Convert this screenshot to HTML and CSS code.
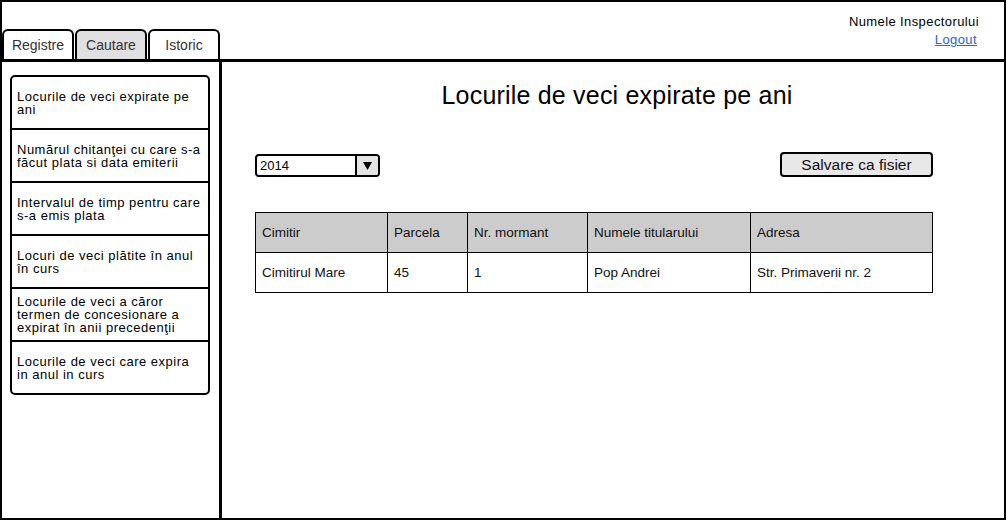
FILE: index.html
```html
<!DOCTYPE html>
<html lang="ro">
<head>
<meta charset="utf-8">
<title>Locurile de veci expirate pe ani</title>
<link rel="stylesheet" href="styles.css">
</head>
<body>
<div class="frame">
  <header class="topbar">
    <nav class="tabs">
      <div class="tab">Registre</div>
      <div class="tab active">Cautare</div>
      <div class="tab">Istoric</div>
    </nav>
    <div class="user">
      <span class="user-name">Numele Inspectorului</span>
      <a class="logout" href="#">Logout</a>
    </div>
  </header>
  <div class="body">
    <aside class="sidebar">
      <ul class="menu">
        <li><span>Locurile de veci expirate pe<br>ani</span></li>
        <li><span>Numărul chitanţei cu care s-a<br>făcut plata si data emiterii</span></li>
        <li><span>Intervalul de timp pentru care<br>s-a emis plata</span></li>
        <li><span>Locuri de veci plătite în anul<br>în curs</span></li>
        <li><span>Locurile de veci a căror<br>termen de concesionare a<br>expirat în anii precedenţii</span></li>
        <li><span>Locurile de veci care expira<br>in anul in curs</span></li>
      </ul>
    </aside>
    <main class="content">
      <h1 class="title">Locurile de veci expirate pe ani</h1>
      <div class="controls">
        <div class="select">
          <span class="select-value">2014</span>
          <span class="select-btn"><svg width="9" height="8" viewBox="0 0 9 8"><polygon points="0,0 9,0 4.5,8" fill="#000"/></svg></span>
        </div>
        <button class="save" type="button">Salvare ca fisier</button>
      </div>
      <table class="grid">
        <thead>
          <tr>
            <th class="c1">Cimitir</th>
            <th class="c2">Parcela</th>
            <th class="c3">Nr. mormant</th>
            <th class="c4">Numele titularului</th>
            <th class="c5">Adresa</th>
          </tr>
        </thead>
        <tbody>
          <tr>
            <td>Cimitirul Mare</td>
            <td>45</td>
            <td>1</td>
            <td>Pop Andrei</td>
            <td>Str. Primaverii nr. 2</td>
          </tr>
        </tbody>
      </table>
    </main>
  </div>
</div>
</body>
</html>
```

FILE: styles.css
```css
html, body {
  margin: 0;
  padding: 0;
  background: #fff;
}

body {
  font-family: "Liberation Sans", Arial, sans-serif;
  color: #000;
}

.frame {
  width: 1006px;
  height: 520px;
  box-sizing: border-box;
  border: 2px solid #000;
  display: flex;
  flex-direction: column;
}

/* ---------- top bar ---------- */
.topbar {
  height: 60px;
  flex: none;
  box-sizing: border-box;
  border-bottom: 3px solid #000;
  display: flex;
  justify-content: space-between;
}

.tabs {
  display: flex;
  align-items: flex-end;
  gap: 1px;
}

.tab {
  width: 72px;
  height: 30px;
  box-sizing: border-box;
  border: 2px solid #000;
  border-bottom: none;
  border-radius: 6px 6px 0 0;
  display: flex;
  align-items: center;
  justify-content: center;
  font-size: 14px;
  color: #333;
  background: #fff;
}

.tab.active {
  background: #e0e0e0;
}

.user {
  padding: 11px 25px 0 0;
  display: flex;
  flex-direction: column;
  align-items: flex-end;
  font-size: 13px;
  line-height: 18px;
  letter-spacing: 0.4px;
}

.logout {
  color: #2a62d9;
  text-decoration: underline;
  margin-right: 2px;
}

/* ---------- body ---------- */
.body {
  flex: 1;
  min-height: 0;
  display: flex;
}

.sidebar {
  width: 220px;
  flex: none;
  box-sizing: border-box;
  border-right: 3px solid #000;
  padding: 13px 0 0 8px;
}

.menu {
  list-style: none;
  margin: 0;
  padding: 0;
  width: 200px;
  box-sizing: border-box;
  border: 2px solid #000;
  border-radius: 5px;
}

.menu li {
  height: 53px;
  box-sizing: border-box;
  border-bottom: 2px solid #000;
  padding: 0 4px 0 5px;
  display: flex;
  align-items: center;
  font-size: 13px;
  line-height: 13px;
  letter-spacing: 0.5px;
  white-space: nowrap;
}

.menu li:last-child {
  border-bottom: none;
  height: 51px;
}

/* ---------- content ---------- */
.content {
  flex: 1;
  padding-top: 19px;
}

.title {
  margin: 0;
  padding-left: 8px;
  font-size: 25px;
  font-weight: normal;
  line-height: 28px;
  letter-spacing: 0.2px;
  text-align: center;
}

.controls {
  margin: 43px 71px 0 33px;
  display: flex;
  justify-content: space-between;
  align-items: flex-end;
}

.select {
  width: 125px;
  height: 23px;
  box-sizing: border-box;
  border: 2px solid #000;
  border-radius: 4px;
  display: flex;
  overflow: hidden;
  font-size: 13px;
}

.select-value {
  flex: 1;
  padding-left: 3px;
  line-height: 19px;
}

.select-btn {
  width: 23px;
  flex: none;
  box-sizing: border-box;
  border-left: 2px solid #000;
  background: #e4e4e4;
  display: flex;
  align-items: center;
  justify-content: center;
}

.save {
  width: 153px;
  height: 25px;
  box-sizing: border-box;
  border: 2px solid #000;
  border-radius: 4px;
  background: #e8e8e8;
  padding: 0;
  font-family: "Liberation Sans", Arial, sans-serif;
  font-size: 15.5px;
  color: #111;
}

/* ---------- table ---------- */
.grid {
  margin: 35px 0 0 33px;
  width: 678px;
  box-sizing: border-box;
  table-layout: fixed;
  border-collapse: separate;
  border-spacing: 0;
  border-left: 1px solid #000;
  border-top: 1px solid #000;
  font-size: 13.5px;
  color: #111;
}

.grid tr {
  height: 40px;
}

.grid th,
.grid td {
  box-sizing: border-box;
  border-right: 1px solid #000;
  border-bottom: 1px solid #000;
  padding: 0 0 0 6px;
  text-align: left;
  font-weight: normal;
  white-space: nowrap;
}

.grid th {
  background: #cccccc;
}

.c1 { width: 132px; }
.c2 { width: 80px; }
.c3 { width: 120px; }
.c4 { width: 163px; }
.c5 { width: 182px; }
```
